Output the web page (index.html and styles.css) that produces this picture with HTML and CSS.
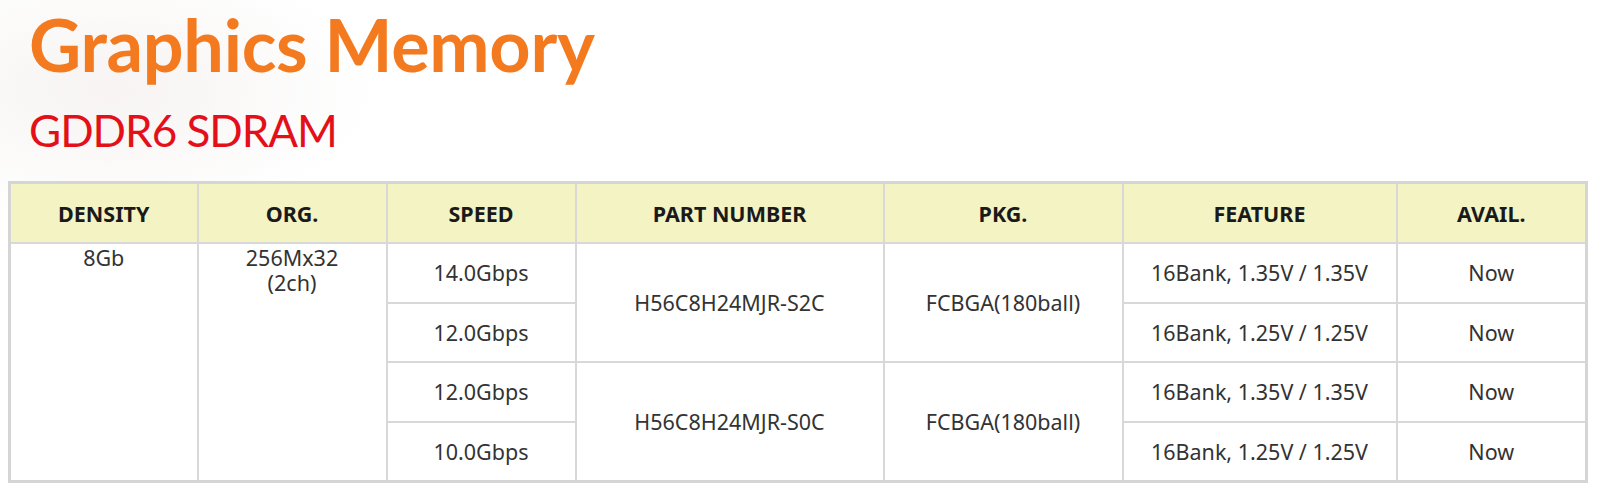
FILE: index.html
```html
<!DOCTYPE html>
<html>
<head>
<meta charset="utf-8">
<link rel="stylesheet" href="styles.css">
</head>
<body>
<div class="page">
  <h1 class="title">Graphics Memory</h1>
  <h2 class="subtitle">GDDR6 SDRAM</h2>
  <table class="spec">
    <colgroup>
      <col class="c-density"><col class="c-org"><col class="c-speed"><col class="c-part"><col class="c-pkg"><col class="c-feature"><col class="c-avail">
    </colgroup>
    <thead>
      <tr>
        <th>DENSITY</th><th>ORG.</th><th>SPEED</th><th>PART NUMBER</th><th>PKG.</th><th>FEATURE</th><th>AVAIL.</th>
      </tr>
    </thead>
    <tbody>
      <tr>
        <td rowspan="4" class="top">8Gb</td>
        <td rowspan="4" class="top"><div class="line">256Mx32</div><div class="line">(2ch)</div></td>
        <td>14.0Gbps</td>
        <td rowspan="2">H56C8H24MJR-S2C</td>
        <td rowspan="2">FCBGA(180ball)</td>
        <td>16Bank, 1.35V / 1.35V</td>
        <td>Now</td>
      </tr>
      <tr>
        <td>12.0Gbps</td>
        <td>16Bank, 1.25V / 1.25V</td>
        <td>Now</td>
      </tr>
      <tr>
        <td>12.0Gbps</td>
        <td rowspan="2">H56C8H24MJR-S0C</td>
        <td rowspan="2">FCBGA(180ball)</td>
        <td>16Bank, 1.35V / 1.35V</td>
        <td>Now</td>
      </tr>
      <tr>
        <td>10.0Gbps</td>
        <td>16Bank, 1.25V / 1.25V</td>
        <td>Now</td>
      </tr>
    </tbody>
  </table>
</div>
</body>
</html>
```
FILE: styles.css
```css
html, body {
  margin: 0;
  padding: 0;
}
body {
  width: 1600px;
  height: 497px;
  overflow: hidden;
  background:
    radial-gradient(ellipse 380px 190px at 110px 90px, rgba(238, 232, 229, 0.5), rgba(255, 255, 255, 0) 70%),
    #ffffff;
}
.page {
  padding: 0 0 0 8px;
}
.title {
  margin: 0;
  padding: 6px 0 0 21px;
  font-family: Lato, "Open Sans", sans-serif;
  font-weight: 700;
  font-size: 72px;
  line-height: 76px;
  color: #f47a20;
  letter-spacing: -0.3px;
}
.subtitle {
  margin: 0;
  padding: 23px 0 0 21px;
  font-family: Lato, "Open Sans", sans-serif;
  font-weight: 400;
  font-size: 44px;
  line-height: 50px;
  color: #e3101a;
  letter-spacing: -1px;
}
.spec {
  margin-top: 26px;
  width: 1577px;
  border-collapse: collapse;
  table-layout: fixed;
  font-family: "Noto Sans", "Open Sans", sans-serif;
  font-size: 21.5px;
  color: #333333;
  border: 3px solid #d5d5d5;
}
.c-density { width: 188px; }
.c-org { width: 189px; }
.c-speed { width: 189px; }
.c-part { width: 308px; }
.c-pkg { width: 239px; }
.c-feature { width: 274px; }
.c-avail { width: 190px; }
.spec th, .spec td {
  border: 2px solid #d8d8d8;
  text-align: center;
  vertical-align: middle;
  padding: 0;
}
.spec th {
  background: #f3f3c4;
  height: 58px;
  font-weight: 700;
  font-size: 21.5px;
  color: #1a1a1a;
}
.spec tbody tr {
  height: 59.5px;
}
.spec td.top {
  vertical-align: top;
  padding-top: 1px;
  line-height: 25px;
}
.spec .line {
  height: 25px;
}
```
